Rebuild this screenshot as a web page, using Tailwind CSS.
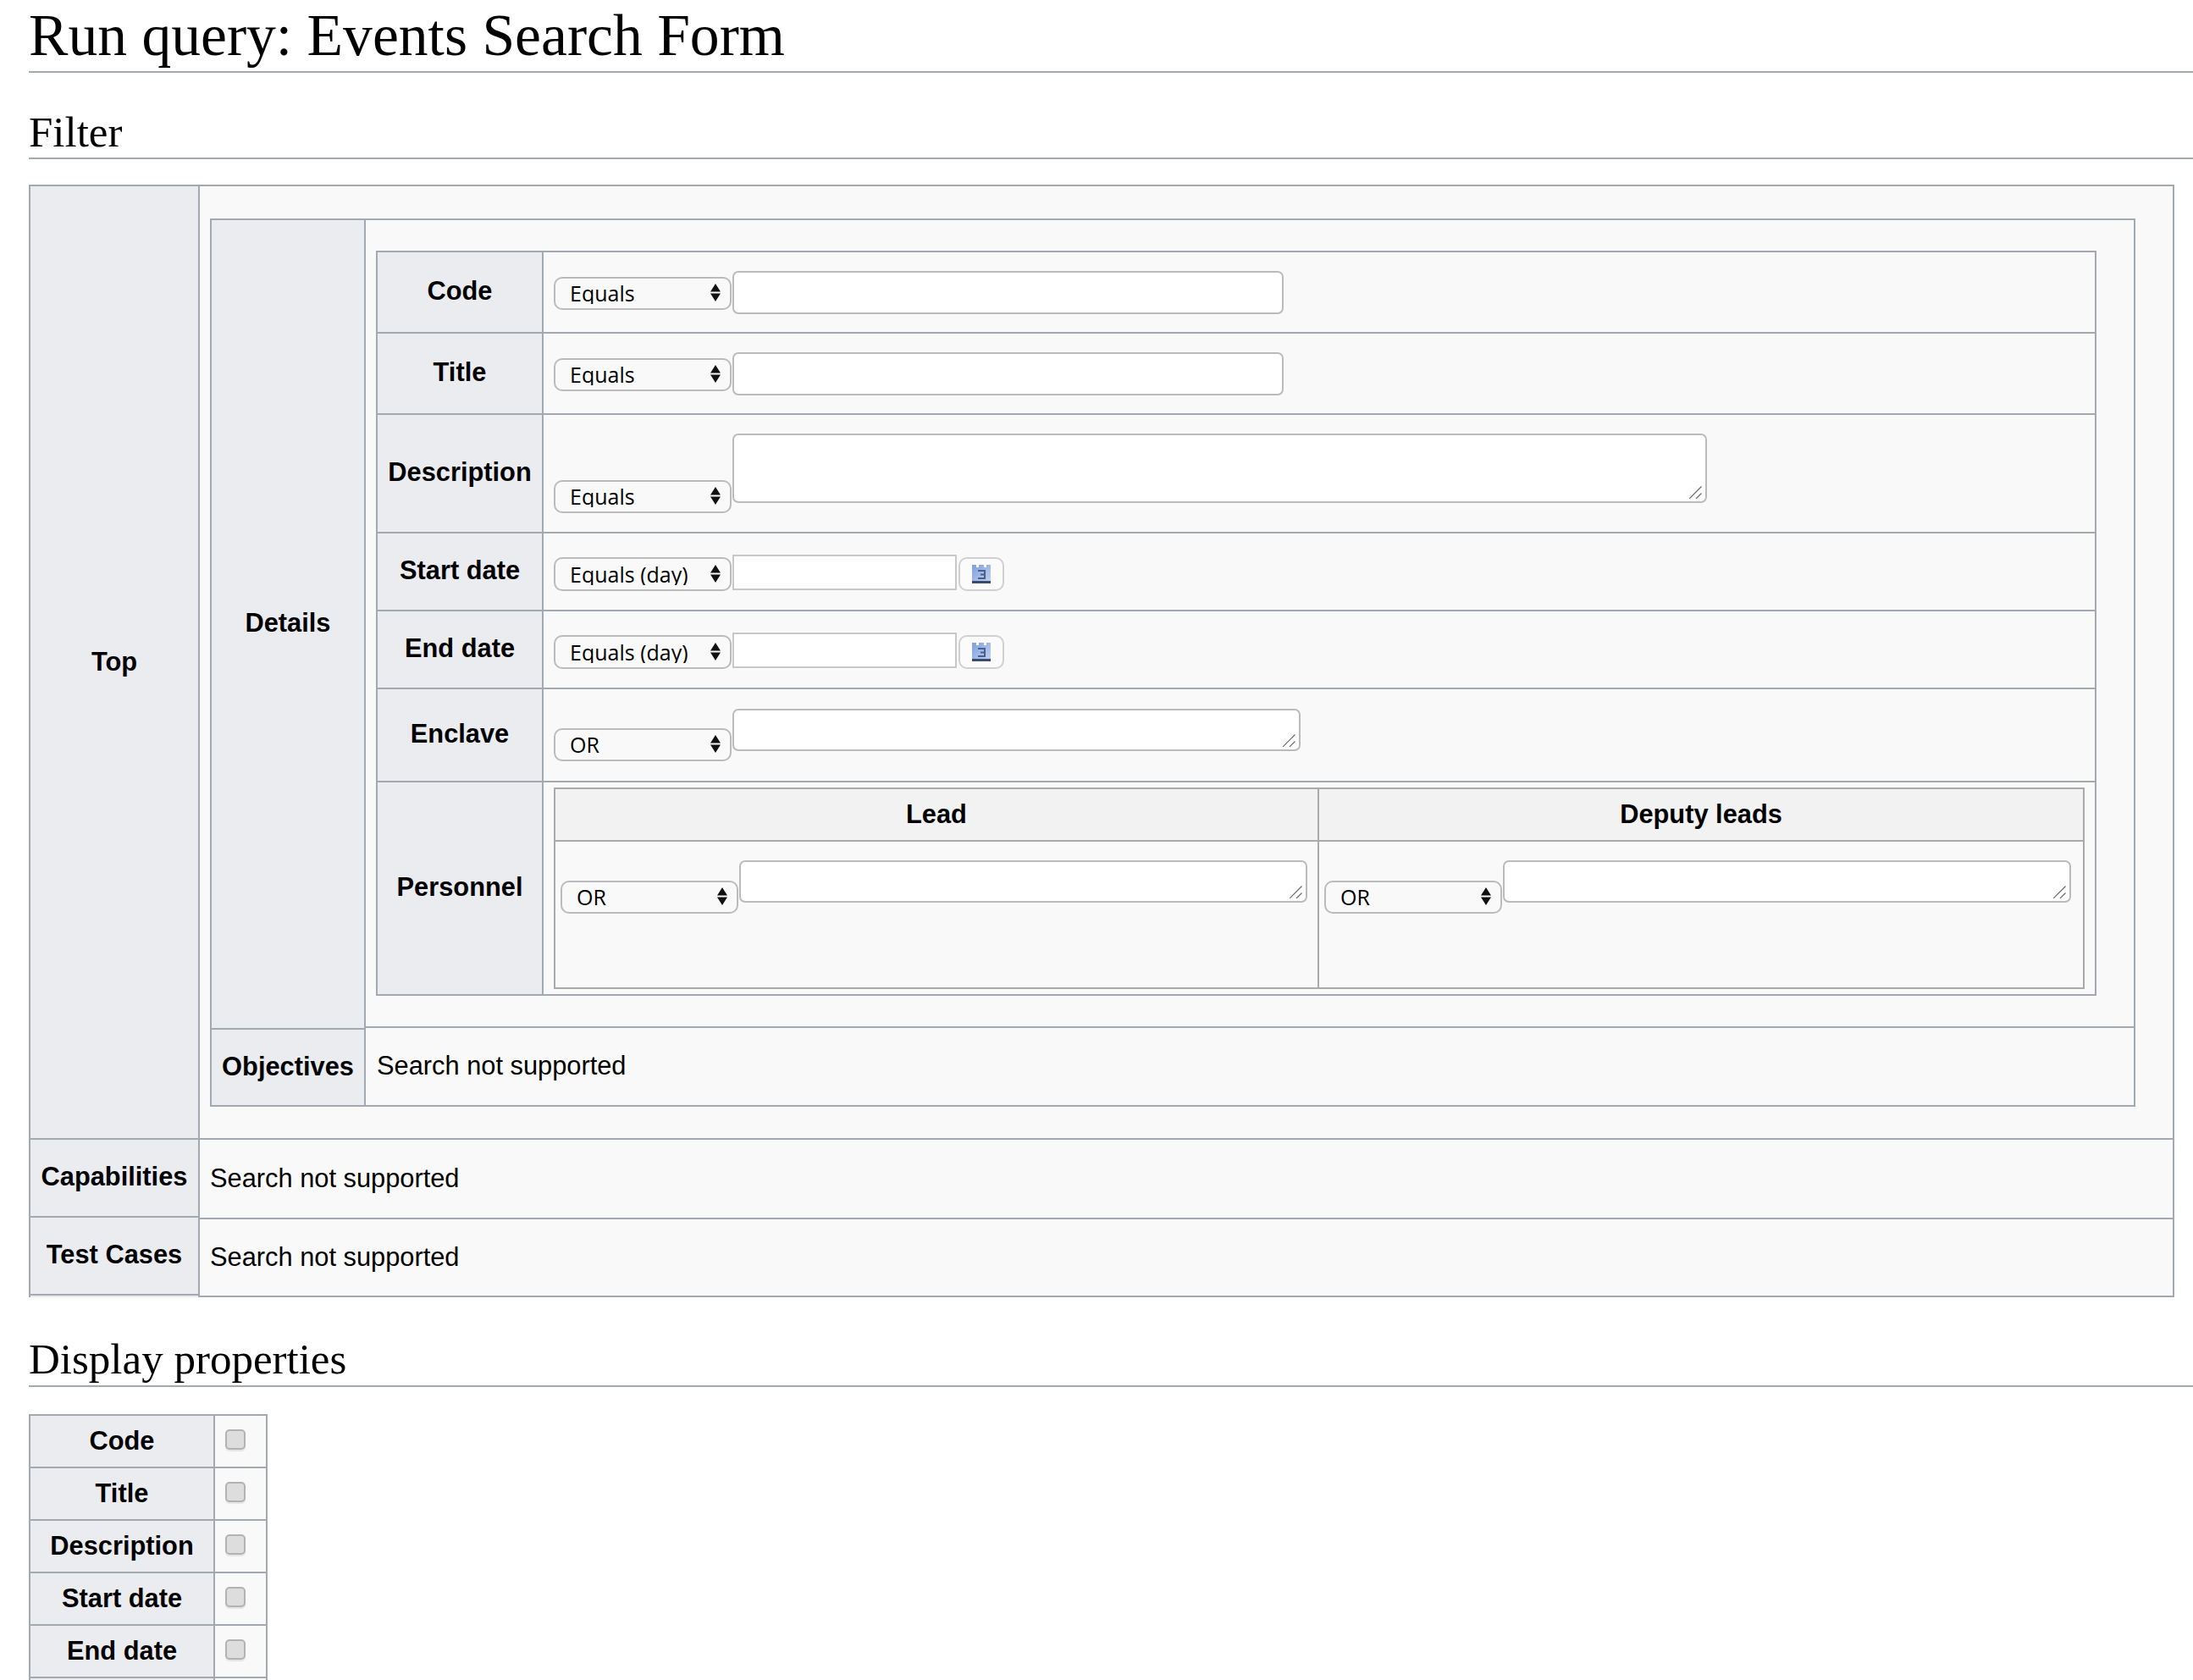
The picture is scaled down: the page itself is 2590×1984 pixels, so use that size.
<!doctype html>
<html lang="en">
  <head>
    <meta charset="UTF-8" />
    <title>Run query: Events Search Form</title>
    <script src="https://cdn.jsdelivr.net/npm/@tailwindcss/browser@4"></script>
  </head>
  <body class="bg-white text-black font-['Liberation_Sans',Arial,sans-serif] text-[30.8px]">
    <div class="h-[1984px] overflow-hidden pl-[34px]">
      <h1 class="h-[86px] border-b-2 border-[#a2a9b1] font-['Liberation_Serif',serif] text-[69.6px] leading-[84px]">Run query: Events Search Form</h1>
      <h2 class="mt-[34px] h-[68px] border-b-2 border-[#a2a9b1] font-['Liberation_Serif',serif] text-[51px] leading-[72px]">Filter</h2>

      <!-- top level form table -->
      <div class="mt-[30px] flex w-[2534px]">
        <div class="w-[200px] shrink-0 border-l-2 border-[#a2a9b1] bg-[#eaecf0] font-bold">
          <div class="flex h-[1128px] items-center justify-center border-y-2 border-[#a2a9b1]">Top</div>
          <div class="flex h-[92px] items-center justify-center border-b-2 border-[#a2a9b1] pb-[2px]">Capabilities</div>
          <div class="flex h-[92px] items-center justify-center border-b-2 border-[#a2a9b1] pb-[2px]">Test Cases</div>
        </div>
        <div class="grow border-x-2 border-[#a2a9b1] bg-[#f9f9f9]">
          <div class="h-[1128px] border-y-2 border-[#a2a9b1] px-3 pt-[38px]">
            <div class="flex w-[2274px]">
              <div class="w-[182px] shrink-0 border-l-2 border-[#a2a9b1] bg-[#eaecf0] font-bold">
                <div class="flex h-[958px] items-center justify-center border-y-2 border-[#a2a9b1] pb-[2px]">Details</div>
                <div class="flex h-[91px] items-center justify-center border-b-2 border-[#a2a9b1]">Objectives</div>
              </div>
              <div class="grow border-x-2 border-[#a2a9b1]">
                <div class="h-[956px] border-y-2 border-[#a2a9b1] px-3 pt-[36px]">

                  <!-- detail fields -->
                  <div class="w-[2032px] border-x-2 border-t-2 border-[#a2a9b1]">
                    <div class="flex h-[96px] border-b-2 border-[#a2a9b1]">
                      <div class="flex w-[196px] shrink-0 items-center justify-center border-r-2 border-[#a2a9b1] bg-[#eaecf0] pb-[2px] font-bold">Code</div>
                      <div class="flex items-start pl-3 pt-[22px]">
                        <div class="relative mt-[7px] h-[39px] w-[210px] shrink-0">
                          <select class="block h-full w-full appearance-none rounded-[10px] border-2 border-[#bbbbbb] bg-[#f9f9f9] pl-[17px] font-['Open_Sans',sans-serif] text-[25px] leading-none"><option>Equals</option></select>
                          <svg class="pointer-events-none absolute right-[13px] top-[8px]" width="12" height="21" viewBox="0 0 12 21"><path d="M6 0L12 9.5H0zM0 11.5H12L6 21z" fill="#111" /></svg>
                        </div>
                        <input type="text" class="ml-px h-[51px] w-[651px] rounded-[7px] border-2 border-[#bbbbbb] bg-white" />
                      </div>
                    </div>
                    <div class="flex h-[96px] border-b-2 border-[#a2a9b1]">
                      <div class="flex w-[196px] shrink-0 items-center justify-center border-r-2 border-[#a2a9b1] bg-[#eaecf0] pb-[2px] font-bold">Title</div>
                      <div class="flex items-start pl-3 pt-[22px]">
                        <div class="relative mt-[7px] h-[39px] w-[210px] shrink-0">
                          <select class="block h-full w-full appearance-none rounded-[10px] border-2 border-[#bbbbbb] bg-[#f9f9f9] pl-[17px] font-['Open_Sans',sans-serif] text-[25px] leading-none"><option>Equals</option></select>
                          <svg class="pointer-events-none absolute right-[13px] top-[8px]" width="12" height="21" viewBox="0 0 12 21"><path d="M6 0L12 9.5H0zM0 11.5H12L6 21z" fill="#111" /></svg>
                        </div>
                        <input type="text" class="ml-px h-[51px] w-[651px] rounded-[7px] border-2 border-[#bbbbbb] bg-white" />
                      </div>
                    </div>
                    <div class="flex h-[140px] border-b-2 border-[#a2a9b1]">
                      <div class="flex w-[196px] shrink-0 items-center justify-center border-r-2 border-[#a2a9b1] bg-[#eaecf0] pb-[2px] font-bold">Description</div>
                      <div class="flex items-start pl-3 pt-[22px]">
                        <div class="relative mt-[55px] h-[39px] w-[210px] shrink-0">
                          <select class="block h-full w-full appearance-none rounded-[10px] border-2 border-[#bbbbbb] bg-[#f9f9f9] pl-[17px] font-['Open_Sans',sans-serif] text-[25px] leading-none"><option>Equals</option></select>
                          <svg class="pointer-events-none absolute right-[13px] top-[8px]" width="12" height="21" viewBox="0 0 12 21"><path d="M6 0L12 9.5H0zM0 11.5H12L6 21z" fill="#111" /></svg>
                        </div>
                        <div class="relative ml-px">
                          <textarea class="block h-[82px] w-[1151px] resize-none rounded-[7px] border-2 border-[#bbbbbb] bg-white"></textarea>
                          <svg class="pointer-events-none absolute bottom-[5px] right-[6px]" width="15" height="15" viewBox="0 0 15 15"><path d="M0 15L14.5 0.5M8 15L14.5 8.5" fill="none" stroke="#666" stroke-width="1.2" /></svg>
                        </div>
                      </div>
                    </div>
                    <div class="flex h-[92px] border-b-2 border-[#a2a9b1]">
                      <div class="flex w-[196px] shrink-0 items-center justify-center border-r-2 border-[#a2a9b1] bg-[#eaecf0] pb-[2px] font-bold">Start date</div>
                      <div class="flex items-start pl-3 pt-[25px]">
                        <div class="relative mt-[3px] h-[40px] w-[210px] shrink-0">
                          <select class="block h-full w-full appearance-none rounded-[10px] border-2 border-[#bbbbbb] bg-[#f9f9f9] pl-[17px] font-['Open_Sans',sans-serif] text-[25px] leading-none"><option>Equals (day)</option></select>
                          <svg class="pointer-events-none absolute right-[13px] top-[9px]" width="12" height="21" viewBox="0 0 12 21"><path d="M6 0L12 9.5H0zM0 11.5H12L6 21z" fill="#111" /></svg>
                        </div>
                        <input type="text" class="ml-px h-[42px] w-[265px] border-2 border-[#c8c8c8] bg-white" />
                        <button type="button" class="ml-[2px] mt-[3px] flex h-[40px] w-[54px] items-center justify-center rounded-[10px] border-2 border-[#d0d0d0] bg-[#fbfbfb]">
                          <svg width="22" height="22" viewBox="0 0 22 22"><defs><linearGradient id="calA" x1="0" y1="0" x2="1" y2="1"><stop offset="0" stop-color="#7f9fdc" /><stop offset="1" stop-color="#c3d4f4" /></linearGradient></defs><path d="M0 0H5V3H8V0H14V3H17V0H22V22H0z" fill="url(#calA)" /><rect x="0" y="19" width="22" height="3" fill="#3b4a73" /><path d="M7 7H15V16H7M10 11.5H15" fill="none" stroke="#4c5f8c" stroke-width="2" /></svg>
                        </button>
                      </div>
                    </div>
                    <div class="flex h-[92px] border-b-2 border-[#a2a9b1]">
                      <div class="flex w-[196px] shrink-0 items-center justify-center border-r-2 border-[#a2a9b1] bg-[#eaecf0] pb-[2px] font-bold">End date</div>
                      <div class="flex items-start pl-3 pt-[25px]">
                        <div class="relative mt-[3px] h-[40px] w-[210px] shrink-0">
                          <select class="block h-full w-full appearance-none rounded-[10px] border-2 border-[#bbbbbb] bg-[#f9f9f9] pl-[17px] font-['Open_Sans',sans-serif] text-[25px] leading-none"><option>Equals (day)</option></select>
                          <svg class="pointer-events-none absolute right-[13px] top-[9px]" width="12" height="21" viewBox="0 0 12 21"><path d="M6 0L12 9.5H0zM0 11.5H12L6 21z" fill="#111" /></svg>
                        </div>
                        <input type="text" class="ml-px h-[42px] w-[265px] border-2 border-[#c8c8c8] bg-white" />
                        <button type="button" class="ml-[2px] mt-[3px] flex h-[40px] w-[54px] items-center justify-center rounded-[10px] border-2 border-[#d0d0d0] bg-[#fbfbfb]">
                          <svg width="22" height="22" viewBox="0 0 22 22"><defs><linearGradient id="calB" x1="0" y1="0" x2="1" y2="1"><stop offset="0" stop-color="#7f9fdc" /><stop offset="1" stop-color="#c3d4f4" /></linearGradient></defs><path d="M0 0H5V3H8V0H14V3H17V0H22V22H0z" fill="url(#calB)" /><rect x="0" y="19" width="22" height="3" fill="#3b4a73" /><path d="M7 7H15V16H7M10 11.5H15" fill="none" stroke="#4c5f8c" stroke-width="2" /></svg>
                        </button>
                      </div>
                    </div>
                    <div class="flex h-[110px] border-b-2 border-[#a2a9b1]">
                      <div class="flex w-[196px] shrink-0 items-center justify-center border-r-2 border-[#a2a9b1] bg-[#eaecf0] pb-[2px] font-bold">Enclave</div>
                      <div class="flex items-start pl-3 pt-[23px]">
                        <div class="relative mt-[23px] h-[39px] w-[210px] shrink-0">
                          <select class="block h-full w-full appearance-none rounded-[10px] border-2 border-[#bbbbbb] bg-[#f9f9f9] pl-[17px] font-['Open_Sans',sans-serif] text-[25px] leading-none"><option>OR</option></select>
                          <svg class="pointer-events-none absolute right-[13px] top-[8px]" width="12" height="21" viewBox="0 0 12 21"><path d="M6 0L12 9.5H0zM0 11.5H12L6 21z" fill="#111" /></svg>
                        </div>
                        <div class="relative ml-px">
                          <textarea class="block h-[50px] w-[671px] resize-none rounded-[7px] border-2 border-[#bbbbbb] bg-white"></textarea>
                          <svg class="pointer-events-none absolute bottom-[5px] right-[6px]" width="15" height="15" viewBox="0 0 15 15"><path d="M0 15L14.5 0.5M8 15L14.5 8.5" fill="none" stroke="#666" stroke-width="1.2" /></svg>
                        </div>
                      </div>
                    </div>
                    <div class="flex h-[252px] border-b-2 border-[#a2a9b1]">
                      <div class="flex w-[196px] shrink-0 items-center justify-center border-r-2 border-[#a2a9b1] bg-[#eaecf0] pb-[2px] font-bold">Personnel</div>
                      <div class="pl-3 pt-[6px]">

                        <!-- lead / deputy multi-instance table -->
                        <div class="grid h-[238px] w-[1808px] grid-cols-[902px_1fr] grid-rows-[62px_1fr] border-2 border-[#aaaaaa]">
                          <div class="flex items-center justify-center border-b-2 border-r-2 border-[#aaaaaa] bg-[#f2f2f2] font-bold">Lead</div>
                          <div class="flex items-center justify-center border-b-2 border-[#aaaaaa] bg-[#f2f2f2] font-bold">Deputy leads</div>
                          <div class="flex items-start border-r-2 border-[#aaaaaa] pl-[6px] pt-[22px]">
                            <div class="relative mt-[24px] h-[39px] w-[210px] shrink-0">
                              <select class="block h-full w-full appearance-none rounded-[10px] border-2 border-[#bbbbbb] bg-[#f9f9f9] pl-[17px] font-['Open_Sans',sans-serif] text-[25px] leading-none"><option>OR</option></select>
                              <svg class="pointer-events-none absolute right-[13px] top-[8px]" width="12" height="21" viewBox="0 0 12 21"><path d="M6 0L12 9.5H0zM0 11.5H12L6 21z" fill="#111" /></svg>
                            </div>
                            <div class="relative ml-px">
                              <textarea class="block h-[50px] w-[671px] resize-none rounded-[7px] border-2 border-[#bbbbbb] bg-white"></textarea>
                              <svg class="pointer-events-none absolute bottom-[5px] right-[6px]" width="15" height="15" viewBox="0 0 15 15"><path d="M0 15L14.5 0.5M8 15L14.5 8.5" fill="none" stroke="#666" stroke-width="1.2" /></svg>
                            </div>
                          </div>
                          <div class="flex items-start pl-[6px] pt-[22px]">
                            <div class="relative mt-[24px] h-[39px] w-[210px] shrink-0">
                              <select class="block h-full w-full appearance-none rounded-[10px] border-2 border-[#bbbbbb] bg-[#f9f9f9] pl-[17px] font-['Open_Sans',sans-serif] text-[25px] leading-none"><option>OR</option></select>
                              <svg class="pointer-events-none absolute right-[13px] top-[8px]" width="12" height="21" viewBox="0 0 12 21"><path d="M6 0L12 9.5H0zM0 11.5H12L6 21z" fill="#111" /></svg>
                            </div>
                            <div class="relative ml-px">
                              <textarea class="block h-[50px] w-[671px] resize-none rounded-[7px] border-2 border-[#bbbbbb] bg-white"></textarea>
                              <svg class="pointer-events-none absolute bottom-[5px] right-[6px]" width="15" height="15" viewBox="0 0 15 15"><path d="M0 15L14.5 0.5M8 15L14.5 8.5" fill="none" stroke="#666" stroke-width="1.2" /></svg>
                            </div>
                          </div>
                        </div>
                      </div>
                    </div>
                  </div>
                </div>
                <div class="flex h-[93px] items-center border-b-2 border-[#a2a9b1] pl-[13px]">Search not supported</div>
              </div>
            </div>
          </div>
          <div class="flex h-[94px] items-center border-b-2 border-[#a2a9b1] pl-3">Search not supported</div>
          <div class="flex h-[92px] items-center border-b-2 border-[#a2a9b1] pl-3">Search not supported</div>
        </div>
      </div>

      <h2 class="mt-[37px] h-[69px] border-b-2 border-[#a2a9b1] font-['Liberation_Serif',serif] text-[51px] leading-[72px]">Display properties</h2>

      <!-- display properties table -->
      <div class="mt-[32px] w-[282px] border-x-2 border-t-2 border-[#a2a9b1]">
        <div class="flex h-[62px] border-b-2 border-[#a2a9b1]"><div class="flex w-[218px] shrink-0 items-center justify-center border-r-2 border-[#a2a9b1] bg-[#eaecf0] font-bold">Code</div><div class="grow bg-[#f9f9f9] pl-[12px] pt-[16px]"><input type="checkbox" class="block size-6 appearance-none rounded-[5px] border-2 border-[#b3b3b3] bg-[#dddddd] shadow-[0_2px_1px_#e4e4e4]" /></div></div>
        <div class="flex h-[62px] border-b-2 border-[#a2a9b1]"><div class="flex w-[218px] shrink-0 items-center justify-center border-r-2 border-[#a2a9b1] bg-[#eaecf0] font-bold">Title</div><div class="grow bg-[#f9f9f9] pl-[12px] pt-[16px]"><input type="checkbox" class="block size-6 appearance-none rounded-[5px] border-2 border-[#b3b3b3] bg-[#dddddd] shadow-[0_2px_1px_#e4e4e4]" /></div></div>
        <div class="flex h-[62px] border-b-2 border-[#a2a9b1]"><div class="flex w-[218px] shrink-0 items-center justify-center border-r-2 border-[#a2a9b1] bg-[#eaecf0] font-bold">Description</div><div class="grow bg-[#f9f9f9] pl-[12px] pt-[16px]"><input type="checkbox" class="block size-6 appearance-none rounded-[5px] border-2 border-[#b3b3b3] bg-[#dddddd] shadow-[0_2px_1px_#e4e4e4]" /></div></div>
        <div class="flex h-[62px] border-b-2 border-[#a2a9b1]"><div class="flex w-[218px] shrink-0 items-center justify-center border-r-2 border-[#a2a9b1] bg-[#eaecf0] font-bold">Start date</div><div class="grow bg-[#f9f9f9] pl-[12px] pt-[16px]"><input type="checkbox" class="block size-6 appearance-none rounded-[5px] border-2 border-[#b3b3b3] bg-[#dddddd] shadow-[0_2px_1px_#e4e4e4]" /></div></div>
        <div class="flex h-[62px] border-b-2 border-[#a2a9b1]"><div class="flex w-[218px] shrink-0 items-center justify-center border-r-2 border-[#a2a9b1] bg-[#eaecf0] font-bold">End date</div><div class="grow bg-[#f9f9f9] pl-[12px] pt-[16px]"><input type="checkbox" class="block size-6 appearance-none rounded-[5px] border-2 border-[#b3b3b3] bg-[#dddddd] shadow-[0_2px_1px_#e4e4e4]" /></div></div>
        <div class="flex h-[62px]"><div class="w-[218px] shrink-0 border-r-2 border-[#a2a9b1] bg-[#eaecf0]"></div><div class="grow bg-[#f9f9f9]"></div></div>
      </div>
    </div>
  </body>
</html>
